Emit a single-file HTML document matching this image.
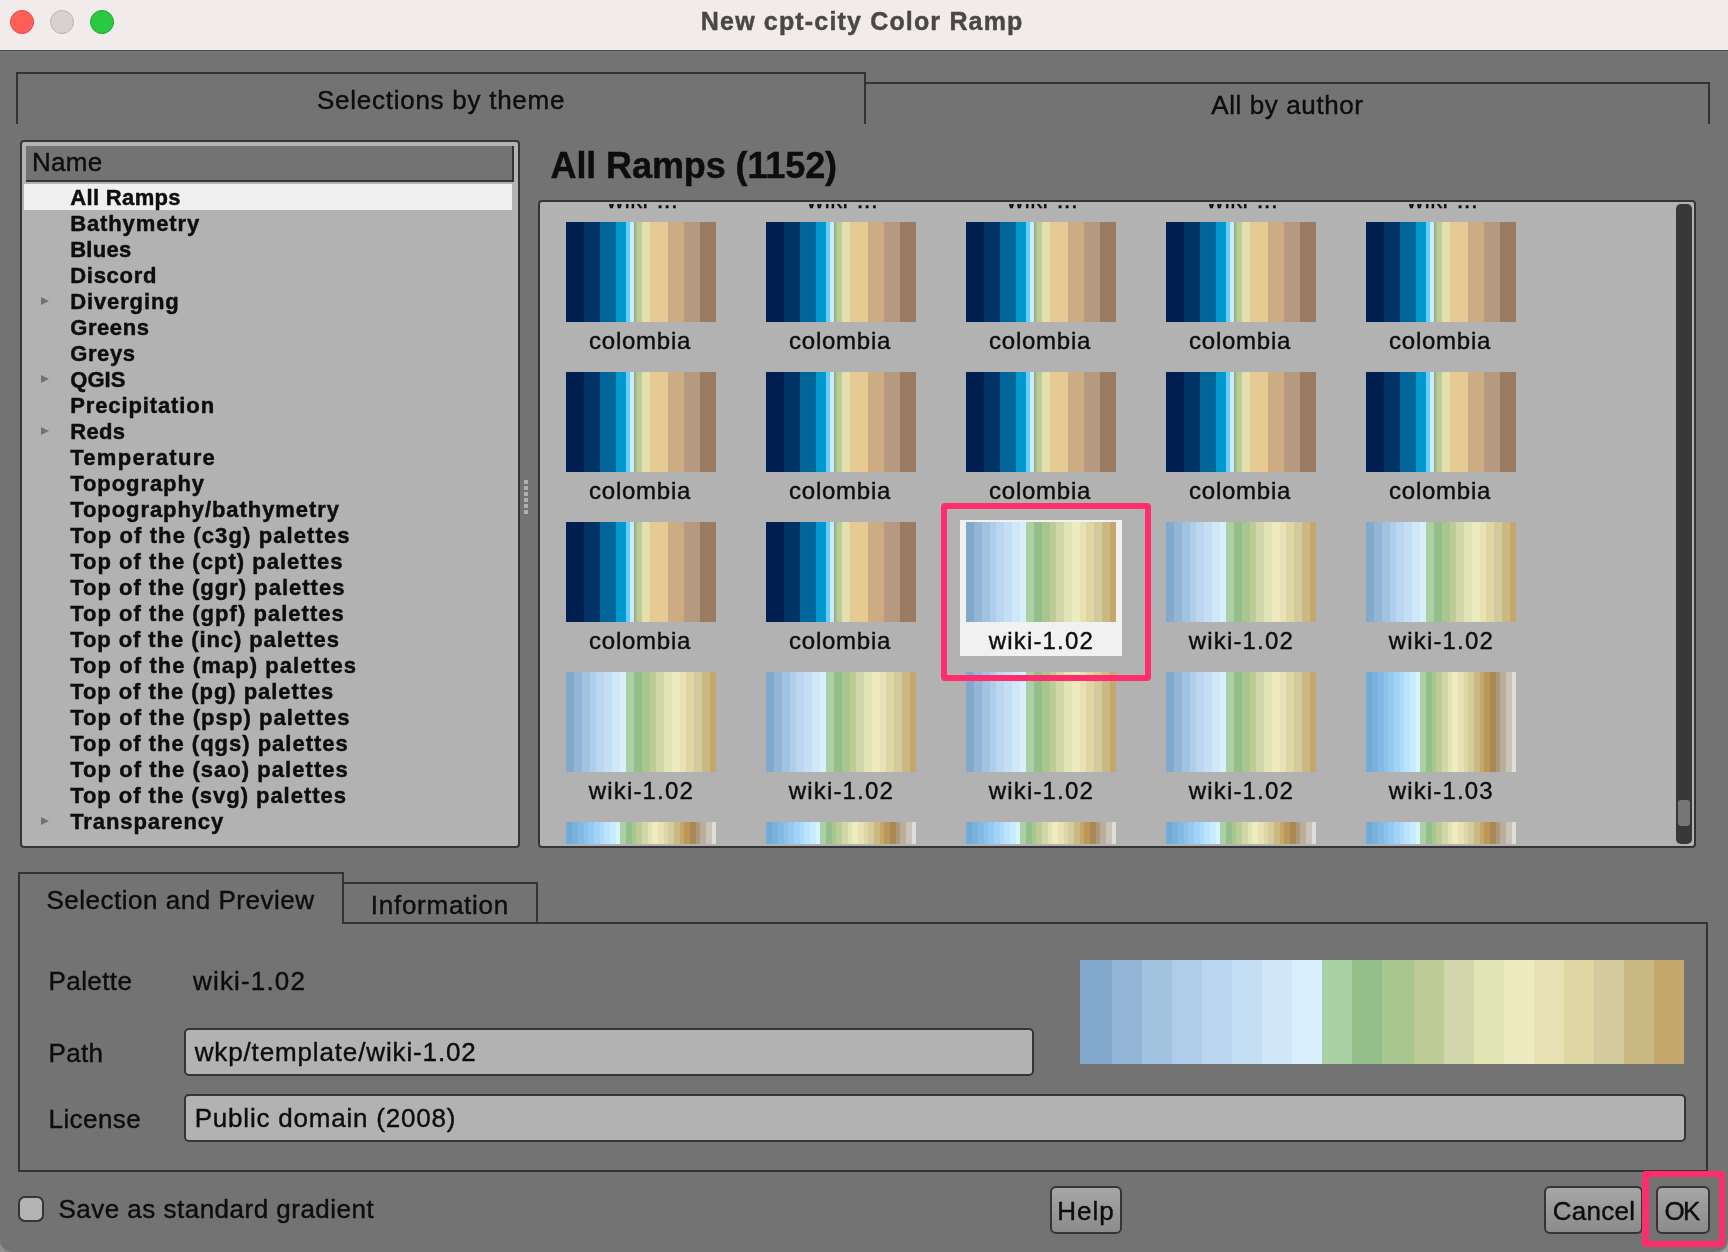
<!DOCTYPE html><html><head><meta charset="utf-8"><title>New cpt-city Color Ramp</title><style>
html,body{margin:0;padding:0}
body{width:1728px;height:1252px;background:#737373;position:relative;overflow:hidden;font-family:"Liberation Sans",sans-serif;color:#0d0d0d}
.t{position:absolute;line-height:1;white-space:pre;-webkit-text-stroke:0.4px currentColor}
#root{position:absolute;left:0;top:0;width:1728px;height:1252px;will-change:transform}
.a{position:absolute;box-sizing:border-box}
.ln{position:absolute;background:#333}
.sw{position:absolute;width:150px;height:100px}
.col{background:linear-gradient(90deg,#001e50 0px, #001e50 18px,#003366 18px, #003366 34px,#006699 34px, #006699 50px,#0099cd 50px, #0099cd 60px,#66ccff 60px, #66ccff 64px,#c8ecff 64px, #c8ecff 68px,#93a87e 68px, #bccc96 72px,#bccc96 72px, #bccc96 76px,#e4dfaf 76px, #e4dfaf 84px,#e6ca94 84px, #e6ca94 102px,#cdab83 102px, #cdab83 118px,#b59a80 118px, #b59a80 134px,#9b7b62 134px, #9b7b62 150px)}
.w2{background:linear-gradient(90deg,#82a8cc 0px, #82a8cc 8px,#93b5d6 8px, #93b5d6 16px,#a2c3e0 16px, #a2c3e0 24px,#aecde8 24px, #aecde8 30px,#bbd6ee 30px, #bbd6ee 38px,#c4def3 38px, #c4def3 46px,#d0e6f9 46px, #d0e6f9 54px,#daeffd 54px, #daeffd 60px,#acd0a5 60px, #acd0a5 68px,#94bf8b 68px, #94bf8b 76px,#a8c68f 76px, #a8c68f 84px,#bdcc96 84px, #bdcc96 90px,#d1d7ab 90px, #d1d7ab 98px,#e1e4b5 98px, #e1e4b5 106px,#efebc0 106px, #efebc0 114px,#e8e1b6 114px, #e8e1b6 120px,#ded6a3 120px, #ded6a3 128px,#d3ca9d 128px, #d3ca9d 136px,#cab982 136px, #cab982 144px,#c3a76b 144px, #c3a76b 150px)}
.w3{background:linear-gradient(90deg,#71abd8 0px, #71abd8 6px,#79b2de 6px, #79b2de 12px,#84b9e3 12px, #84b9e3 18px,#8dc1ea 18px, #8dc1ea 22px,#96c9f0 22px, #96c9f0 28px,#a1d2f7 28px, #a1d2f7 34px,#acdbfb 34px, #acdbfb 38px,#b9e3ff 38px, #b9e3ff 44px,#c6ecff 44px, #c6ecff 50px,#d8f2fe 50px, #d8f2fe 54px,#acd0a5 54px, #acd0a5 60px,#94bf8b 60px, #94bf8b 66px,#a8c68f 66px, #a8c68f 70px,#bdcc96 70px, #bdcc96 76px,#d1d7ab 76px, #d1d7ab 82px,#e1e4b5 82px, #e1e4b5 86px,#efebc0 86px, #efebc0 92px,#e8e1b6 92px, #e8e1b6 98px,#ded6a3 98px, #ded6a3 102px,#d3ca9d 102px, #d3ca9d 108px,#cab982 108px, #cab982 114px,#c3a76b 114px, #c3a76b 118px,#b9985a 118px, #b9985a 124px,#aa8753 124px, #aa8753 130px,#ac9a7c 130px, #ac9a7c 134px,#baae9a 134px, #baae9a 140px,#cac3b8 140px, #cac3b8 146px,#e0ded8 146px, #e0ded8 150px)}
.tri{position:absolute;left:41px;width:0;height:0;border-left:8px solid #727272;border-top:4px solid transparent;border-bottom:4px solid transparent}
.btn{position:absolute;box-sizing:border-box;border:2px solid #353535;border-radius:6px;background:linear-gradient(#a6a6a6,#8b8b8b)}
.fld{position:absolute;box-sizing:border-box;border:2px solid #353535;border-radius:5px;background:#b2b2b2}
.hl{position:absolute;box-sizing:border-box;border:6px solid #ff2d6e;border-radius:4px}
</style></head><body><div id="root">
<div class="a" style="left:0;top:0;width:1728px;height:50px;background:#f1ebeb"></div>
<div class="ln" style="left:0;top:49.5px;width:1728px;height:1.5px;background:#4d4b4b"></div>
<div class="a" style="left:10px;top:10px;width:24px;height:24px;border-radius:50%;background:#ff5f57;border:1px solid #e2463f"></div>
<div class="a" style="left:50px;top:10px;width:24px;height:24px;border-radius:50%;background:#d7d1d1;border:1px solid #bbb5b5"></div>
<div class="a" style="left:90px;top:10px;width:24px;height:24px;border-radius:50%;background:#29c940;border:1px solid #14ae27"></div>
<div class="ln" style="left:16px;top:72px;width:850px;height:2px"></div>
<div class="ln" style="left:16px;top:72px;width:2px;height:52px"></div>
<div class="ln" style="left:864px;top:72px;width:2px;height:52px"></div>
<div class="ln" style="left:866px;top:82px;width:844px;height:2px"></div>
<div class="ln" style="left:1708px;top:82px;width:2px;height:42px"></div>
<div class="a" style="left:20px;top:140px;width:500px;height:708px;border:2px solid #353535;border-radius:4px;background:#b2b2b2"></div>
<div class="a" style="left:26px;top:146px;width:488px;height:36px;background:#737373;border-right:2px solid #353535;border-bottom:2px solid #353535"></div>
<div class="a" style="left:24px;top:184px;width:488px;height:26px;background:#f0f0f0"></div>
<div class="tri" style="top:297px"></div>
<div class="tri" style="top:375px"></div>
<div class="tri" style="top:427px"></div>
<div class="tri" style="top:817px"></div>
<div class="a" style="left:524px;top:480px;width:4px;height:4px;background:#b0b0b0"></div>
<div class="a" style="left:524px;top:486px;width:4px;height:4px;background:#b0b0b0"></div>
<div class="a" style="left:524px;top:492px;width:4px;height:4px;background:#b0b0b0"></div>
<div class="a" style="left:524px;top:498px;width:4px;height:4px;background:#b0b0b0"></div>
<div class="a" style="left:524px;top:504px;width:4px;height:4px;background:#b0b0b0"></div>
<div class="a" style="left:524px;top:510px;width:4px;height:4px;background:#b0b0b0"></div>
<div class="a" style="left:538px;top:200px;width:1158px;height:648px;border:2px solid #353535;border-radius:4px;background:#b2b2b2"></div>
<div id="grid" class="a" style="left:540px;top:204px;width:1136px;height:640px;overflow:hidden">
<div class="a" style="left:420px;top:316px;width:162px;height:136px;background:#f1f1f1"></div>
<div class="sw col" style="left:26px;top:18px"></div>
<div class="sw col" style="left:226px;top:18px"></div>
<div class="sw col" style="left:426px;top:18px"></div>
<div class="sw col" style="left:626px;top:18px"></div>
<div class="sw col" style="left:826px;top:18px"></div>
<div class="sw col" style="left:26px;top:168px"></div>
<div class="sw col" style="left:226px;top:168px"></div>
<div class="sw col" style="left:426px;top:168px"></div>
<div class="sw col" style="left:626px;top:168px"></div>
<div class="sw col" style="left:826px;top:168px"></div>
<div class="sw col" style="left:26px;top:318px"></div>
<div class="sw col" style="left:226px;top:318px"></div>
<div class="sw w2" style="left:426px;top:318px"></div>
<div class="sw w2" style="left:626px;top:318px"></div>
<div class="sw w2" style="left:826px;top:318px"></div>
<div class="sw w2" style="left:26px;top:468px"></div>
<div class="sw w2" style="left:226px;top:468px"></div>
<div class="sw w2" style="left:426px;top:468px"></div>
<div class="sw w2" style="left:626px;top:468px"></div>
<div class="sw w3" style="left:826px;top:468px"></div>
<div class="sw w3" style="left:26px;top:618px"></div>
<div class="sw w3" style="left:226px;top:618px"></div>
<div class="sw w3" style="left:426px;top:618px"></div>
<div class="sw w3" style="left:626px;top:618px"></div>
<div class="sw w3" style="left:826px;top:618px"></div>
<span class="t" style="left:49.05px;top:125.00px;font-size:24px;letter-spacing:0.757px;">colombia</span>
<span class="t" style="left:249.05px;top:125.00px;font-size:24px;letter-spacing:0.757px;">colombia</span>
<span class="t" style="left:449.05px;top:125.00px;font-size:24px;letter-spacing:0.757px;">colombia</span>
<span class="t" style="left:649.05px;top:125.00px;font-size:24px;letter-spacing:0.757px;">colombia</span>
<span class="t" style="left:849.05px;top:125.00px;font-size:24px;letter-spacing:0.757px;">colombia</span>
<span class="t" style="left:49.05px;top:275.00px;font-size:24px;letter-spacing:0.757px;">colombia</span>
<span class="t" style="left:249.05px;top:275.00px;font-size:24px;letter-spacing:0.757px;">colombia</span>
<span class="t" style="left:449.05px;top:275.00px;font-size:24px;letter-spacing:0.757px;">colombia</span>
<span class="t" style="left:649.05px;top:275.00px;font-size:24px;letter-spacing:0.757px;">colombia</span>
<span class="t" style="left:849.05px;top:275.00px;font-size:24px;letter-spacing:0.757px;">colombia</span>
<span class="t" style="left:49.05px;top:425.00px;font-size:24px;letter-spacing:0.757px;">colombia</span>
<span class="t" style="left:249.05px;top:425.00px;font-size:24px;letter-spacing:0.757px;">colombia</span>
<span class="t" style="left:448.80px;top:425.00px;font-size:24px;letter-spacing:1.163px;">wiki-1.02</span>
<span class="t" style="left:648.80px;top:425.00px;font-size:24px;letter-spacing:1.163px;">wiki-1.02</span>
<span class="t" style="left:848.80px;top:425.00px;font-size:24px;letter-spacing:1.163px;">wiki-1.02</span>
<span class="t" style="left:48.80px;top:575.00px;font-size:24px;letter-spacing:1.162px;">wiki-1.02</span>
<span class="t" style="left:248.80px;top:575.00px;font-size:24px;letter-spacing:1.162px;">wiki-1.02</span>
<span class="t" style="left:448.80px;top:575.00px;font-size:24px;letter-spacing:1.163px;">wiki-1.02</span>
<span class="t" style="left:648.80px;top:575.00px;font-size:24px;letter-spacing:1.163px;">wiki-1.02</span>
<span class="t" style="left:848.65px;top:575.00px;font-size:24px;letter-spacing:1.169px;">wiki-1.03</span>
<span class="t" style="left:66.65px;top:-16.00px;font-size:24px;letter-spacing:0.421px;">wiki-...</span>
<span class="t" style="left:266.65px;top:-16.00px;font-size:24px;letter-spacing:0.421px;">wiki-...</span>
<span class="t" style="left:466.65px;top:-16.00px;font-size:24px;letter-spacing:0.421px;">wiki-...</span>
<span class="t" style="left:666.65px;top:-16.00px;font-size:24px;letter-spacing:0.421px;">wiki-...</span>
<span class="t" style="left:866.65px;top:-16.00px;font-size:24px;letter-spacing:0.421px;">wiki-...</span>
</div>
<div class="a" style="left:1676px;top:204px;width:16px;height:640px;border-radius:5px;background:#373737"></div>
<div class="a" style="left:1678px;top:800px;width:12px;height:26px;border-radius:3px;background:#767676"></div>
<div class="hl" style="left:941px;top:503px;width:209.5px;height:178px"></div>
<div class="ln" style="left:18px;top:872px;width:326px;height:2px"></div>
<div class="ln" style="left:18px;top:872px;width:2px;height:300px"></div>
<div class="ln" style="left:342px;top:872px;width:2px;height:52px"></div>
<div class="ln" style="left:344px;top:882px;width:194px;height:2px"></div>
<div class="ln" style="left:536px;top:882px;width:2px;height:42px"></div>
<div class="ln" style="left:342px;top:922px;width:1366px;height:2px"></div>
<div class="ln" style="left:1706px;top:922px;width:2px;height:250px"></div>
<div class="ln" style="left:18px;top:1170px;width:1690px;height:2px"></div>
<div class="fld" style="left:184px;top:1028px;width:850px;height:48px"></div>
<div class="fld" style="left:184px;top:1094px;width:1502px;height:47.5px"></div>
<div class="a" style="left:1080px;top:960px;width:604px;height:104px;background:linear-gradient(90deg,#82a8cc 0px, #82a8cc 32px,#93b5d6 32px, #93b5d6 62px,#a2c3e0 62px, #a2c3e0 92px,#aecde8 92px, #aecde8 122px,#bbd6ee 122px, #bbd6ee 152px,#c4def3 152px, #c4def3 182px,#d0e6f9 182px, #d0e6f9 212px,#daeffd 212px, #daeffd 242px,#acd0a5 242px, #acd0a5 272px,#94bf8b 272px, #94bf8b 302px,#a8c68f 302px, #a8c68f 334px,#bdcc96 334px, #bdcc96 364px,#d1d7ab 364px, #d1d7ab 394px,#e1e4b5 394px, #e1e4b5 424px,#efebc0 424px, #efebc0 454px,#e8e1b6 454px, #e8e1b6 484px,#ded6a3 484px, #ded6a3 514px,#d3ca9d 514px, #d3ca9d 544px,#cab982 544px, #cab982 574px,#c3a76b 574px, #c3a76b 604px)"></div>
<div class="a" style="left:18px;top:1196px;width:26px;height:26px;border:2px solid #353535;border-radius:7px;background:#b4b4b4"></div>
<div class="btn" style="left:1050px;top:1186px;width:72px;height:47.5px"></div>
<div class="btn" style="left:1544px;top:1186px;width:99px;height:47.5px"></div>
<div class="btn" style="left:1656px;top:1186px;width:54px;height:47.5px"></div>
<div class="a" style="left:1716px;top:1240px;width:12px;height:12px;background:radial-gradient(circle at 0 0,rgba(115,115,115,0) 11px,#a0a0a0 13px)"></div>
<div class="a" style="left:0;top:1240px;width:12px;height:12px;background:radial-gradient(circle at 12px 0,rgba(115,115,115,0) 11px,#909090 13px)"></div>
<div class="hl" style="left:1642px;top:1171px;width:83px;height:76px;border-left-width:7px"></div>
<span class="t" style="left:700.85px;top:9.00px;font-size:25px;letter-spacing:1.164px;font-weight:700;-webkit-text-stroke-width:0.45px;color:#4a4746;">New cpt-city Color Ramp</span>
<span class="t" style="left:317.00px;top:87.00px;font-size:26px;letter-spacing:0.736px;">Selections by theme</span>
<span class="t" style="left:1211.25px;top:92.00px;font-size:26px;letter-spacing:0.604px;">All by author</span>
<span class="t" style="left:31.95px;top:149.00px;font-size:26px;letter-spacing:0.283px;">Name</span>
<span class="t" style="left:550.50px;top:147.60px;font-size:36px;letter-spacing:-0.103px;font-weight:700;-webkit-text-stroke-width:0.45px;">All Ramps (1152)</span>
<span class="t" style="left:70.20px;top:186.80px;font-size:22px;letter-spacing:0.350px;font-weight:700;-webkit-text-stroke-width:0.45px;">All Ramps</span>
<span class="t" style="left:70.20px;top:212.80px;font-size:22px;letter-spacing:0.883px;font-weight:700;-webkit-text-stroke-width:0.45px;">Bathymetry</span>
<span class="t" style="left:70.20px;top:238.80px;font-size:22px;letter-spacing:0.287px;font-weight:700;-webkit-text-stroke-width:0.45px;">Blues</span>
<span class="t" style="left:70.20px;top:264.80px;font-size:22px;letter-spacing:0.725px;font-weight:700;-webkit-text-stroke-width:0.45px;">Discord</span>
<span class="t" style="left:70.20px;top:290.80px;font-size:22px;letter-spacing:0.881px;font-weight:700;-webkit-text-stroke-width:0.45px;">Diverging</span>
<span class="t" style="left:70.20px;top:316.80px;font-size:22px;letter-spacing:0.590px;font-weight:700;-webkit-text-stroke-width:0.45px;">Greens</span>
<span class="t" style="left:70.20px;top:342.80px;font-size:22px;letter-spacing:0.613px;font-weight:700;-webkit-text-stroke-width:0.45px;">Greys</span>
<span class="t" style="left:70.20px;top:368.80px;font-size:22px;letter-spacing:0.100px;font-weight:700;-webkit-text-stroke-width:0.45px;">QGIS</span>
<span class="t" style="left:70.20px;top:394.80px;font-size:22px;letter-spacing:0.887px;font-weight:700;-webkit-text-stroke-width:0.45px;">Precipitation</span>
<span class="t" style="left:70.20px;top:420.80px;font-size:22px;letter-spacing:0.317px;font-weight:700;-webkit-text-stroke-width:0.45px;">Reds</span>
<span class="t" style="left:70.20px;top:446.80px;font-size:22px;letter-spacing:1.295px;font-weight:700;-webkit-text-stroke-width:0.45px;">Temperature</span>
<span class="t" style="left:70.20px;top:472.80px;font-size:22px;letter-spacing:0.939px;font-weight:700;-webkit-text-stroke-width:0.45px;">Topography</span>
<span class="t" style="left:70.20px;top:498.80px;font-size:22px;letter-spacing:0.928px;font-weight:700;-webkit-text-stroke-width:0.45px;">Topography/bathymetry</span>
<span class="t" style="left:70.20px;top:524.80px;font-size:22px;letter-spacing:1.117px;font-weight:700;-webkit-text-stroke-width:0.45px;">Top of the (c3g) palettes</span>
<span class="t" style="left:70.20px;top:550.80px;font-size:22px;letter-spacing:1.029px;font-weight:700;-webkit-text-stroke-width:0.45px;">Top of the (cpt) palettes</span>
<span class="t" style="left:70.20px;top:576.80px;font-size:22px;letter-spacing:1.002px;font-weight:700;-webkit-text-stroke-width:0.45px;">Top of the (ggr) palettes</span>
<span class="t" style="left:70.20px;top:602.80px;font-size:22px;letter-spacing:1.027px;font-weight:700;-webkit-text-stroke-width:0.45px;">Top of the (gpf) palettes</span>
<span class="t" style="left:70.20px;top:628.80px;font-size:22px;letter-spacing:0.925px;font-weight:700;-webkit-text-stroke-width:0.45px;">Top of the (inc) palettes</span>
<span class="t" style="left:70.20px;top:654.80px;font-size:22px;letter-spacing:1.077px;font-weight:700;-webkit-text-stroke-width:0.45px;">Top of the (map) palettes</span>
<span class="t" style="left:70.20px;top:680.80px;font-size:22px;letter-spacing:0.939px;font-weight:700;-webkit-text-stroke-width:0.45px;">Top of the (pg) palettes</span>
<span class="t" style="left:70.20px;top:706.80px;font-size:22px;letter-spacing:1.065px;font-weight:700;-webkit-text-stroke-width:0.45px;">Top of the (psp) palettes</span>
<span class="t" style="left:70.20px;top:732.80px;font-size:22px;letter-spacing:0.990px;font-weight:700;-webkit-text-stroke-width:0.45px;">Top of the (qgs) palettes</span>
<span class="t" style="left:70.20px;top:758.80px;font-size:22px;letter-spacing:1.042px;font-weight:700;-webkit-text-stroke-width:0.45px;">Top of the (sao) palettes</span>
<span class="t" style="left:70.20px;top:784.80px;font-size:22px;letter-spacing:0.963px;font-weight:700;-webkit-text-stroke-width:0.45px;">Top of the (svg) palettes</span>
<span class="t" style="left:70.20px;top:810.80px;font-size:22px;letter-spacing:0.905px;font-weight:700;-webkit-text-stroke-width:0.45px;">Transparency</span>
<span class="t" style="left:46.40px;top:887.00px;font-size:26px;letter-spacing:0.520px;">Selection and Preview</span>
<span class="t" style="left:370.80px;top:892.30px;font-size:26px;letter-spacing:0.735px;">Information</span>
<span class="t" style="left:48.55px;top:968.00px;font-size:26px;letter-spacing:0.392px;">Palette</span>
<span class="t" style="left:193.05px;top:968.00px;font-size:26px;letter-spacing:1.156px;">wiki-1.02</span>
<span class="t" style="left:48.55px;top:1039.50px;font-size:26px;letter-spacing:0.283px;">Path</span>
<span class="t" style="left:194.65px;top:1038.60px;font-size:26px;letter-spacing:0.864px;">wkp/template/wiki-1.02</span>
<span class="t" style="left:48.55px;top:1105.50px;font-size:26px;letter-spacing:0.417px;">License</span>
<span class="t" style="left:194.75px;top:1104.70px;font-size:26px;letter-spacing:0.782px;">Public domain (2008)</span>
<span class="t" style="left:58.40px;top:1196.00px;font-size:26px;letter-spacing:0.490px;">Save as standard gradient</span>
<span class="t" style="left:1057.25px;top:1198.00px;font-size:26px;letter-spacing:0.967px;">Help</span>
<span class="t" style="left:1552.70px;top:1197.60px;font-size:26px;letter-spacing:0.300px;">Cancel</span>
<span class="t" style="left:1664.60px;top:1197.60px;font-size:26px;letter-spacing:-1.900px;">OK</span>
</div></body></html>
